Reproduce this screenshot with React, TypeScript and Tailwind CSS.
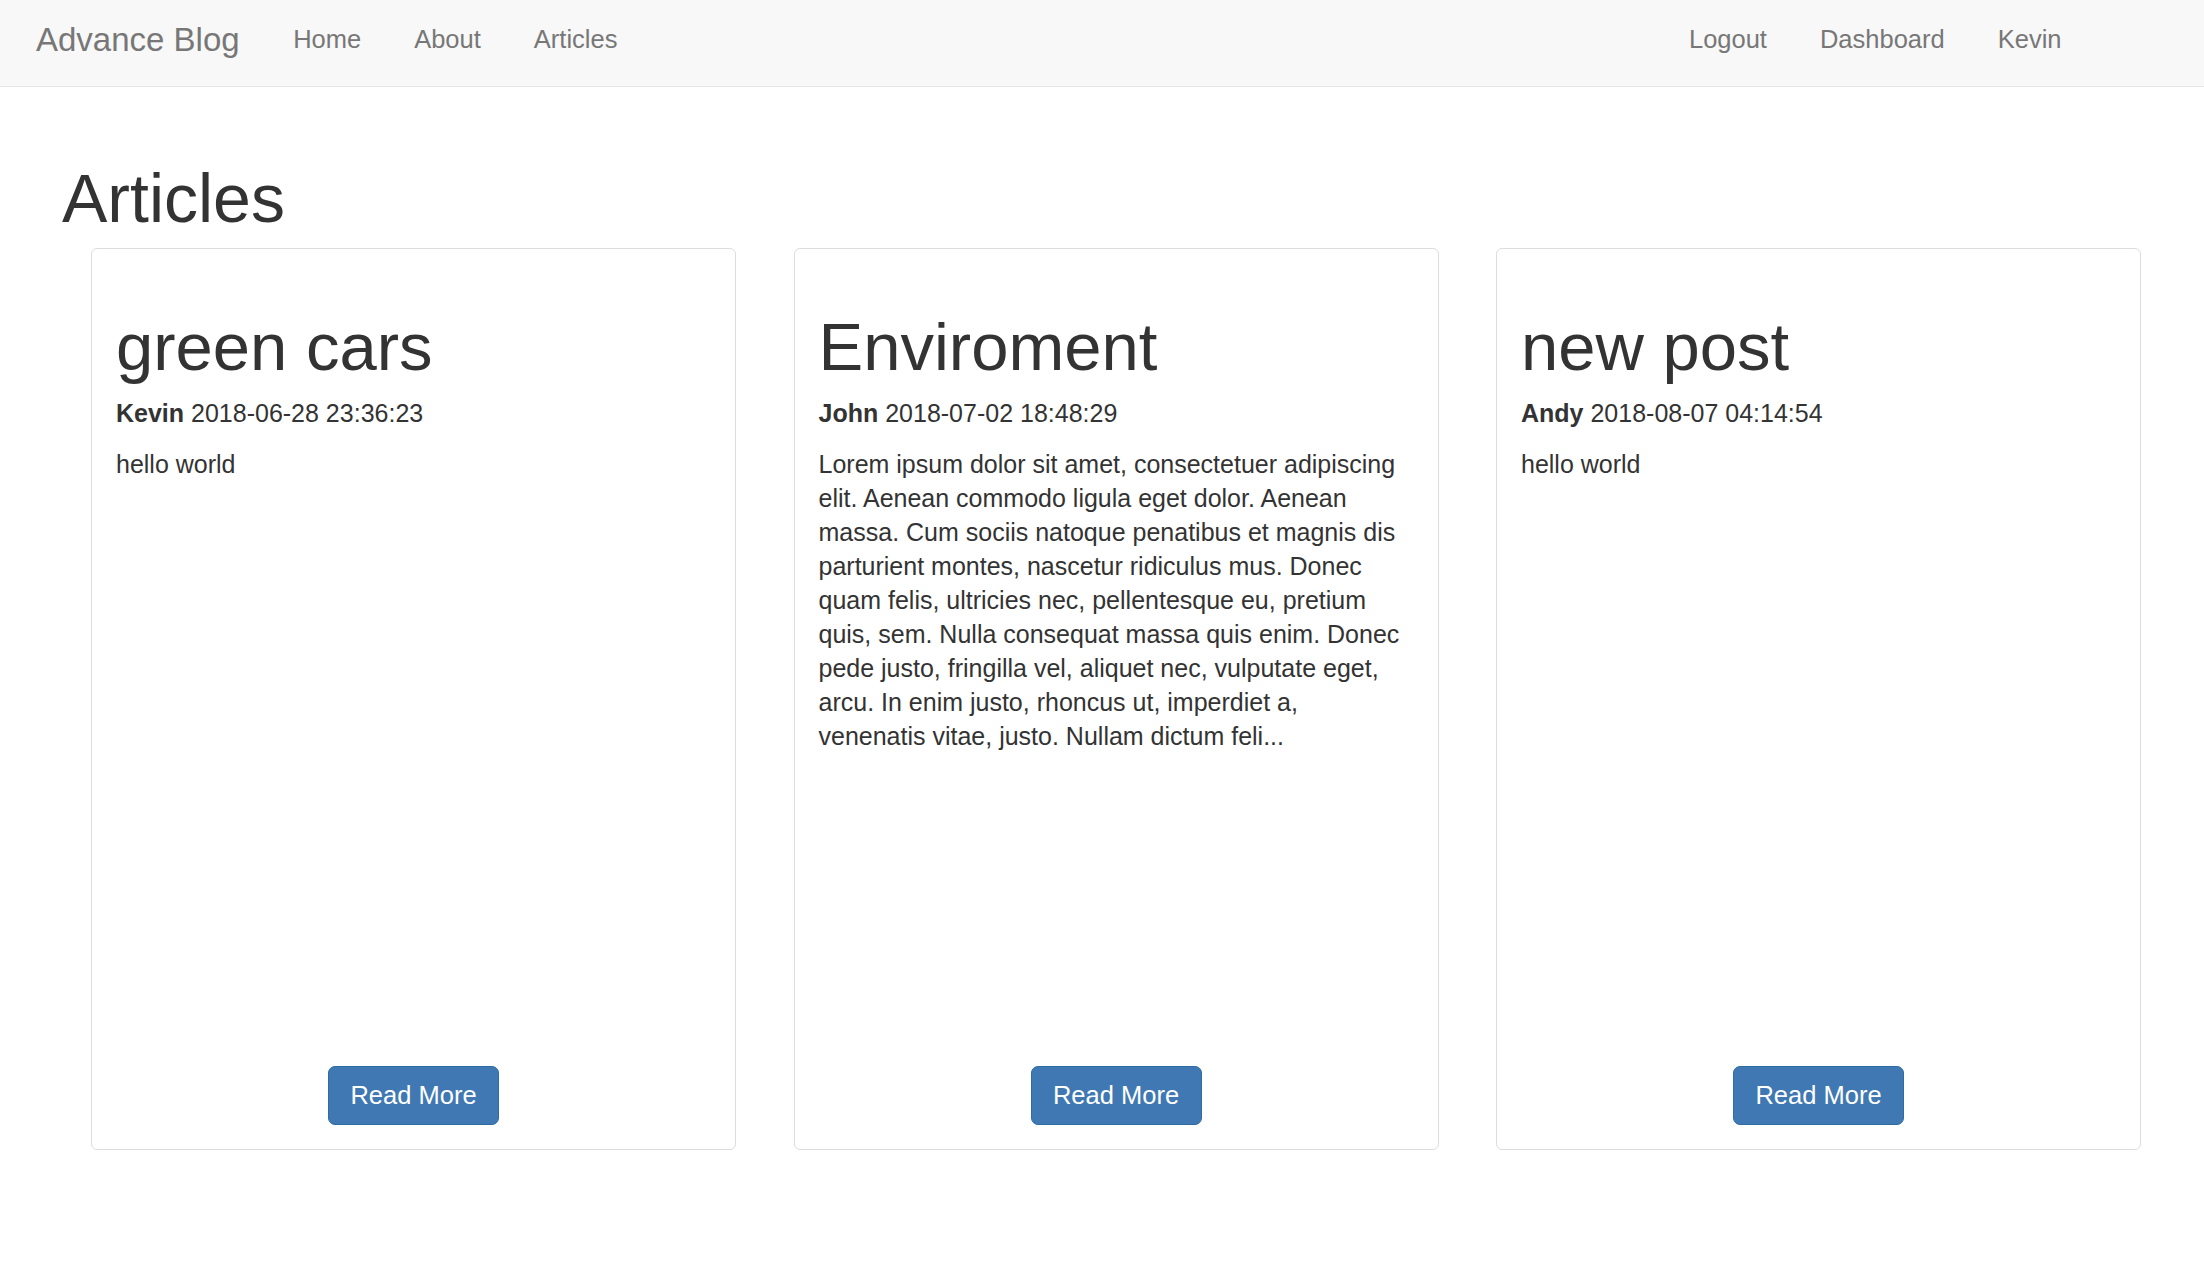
const articles = [
  {
    title: 'green cars',
    author: 'Kevin',
    date: '2018-06-28 23:36:23',
    body: 'hello world',
  },
  {
    title: 'Enviroment',
    author: 'John',
    date: '2018-07-02 18:48:29',
    body:
      'Lorem ipsum dolor sit amet, consectetuer adipiscing elit. Aenean commodo ligula eget dolor. Aenean massa. Cum sociis natoque penatibus et magnis dis parturient montes, nascetur ridiculus mus. Donec quam felis, ultricies nec, pellentesque eu, pretium quis, sem. Nulla consequat massa quis enim. Donec pede justo, fringilla vel, aliquet nec, vulputate eget, arcu. In enim justo, rhoncus ut, imperdiet a, venenatis vitae, justo. Nullam dictum feli...',
  },
  {
    title: 'new post',
    author: 'Andy',
    date: '2018-08-07 04:14:54',
    body: 'hello world',
  },
];

const leftLinks = ['Home', 'About', 'Articles'];
const rightLinks = ['Logout', 'Dashboard', 'Kevin'];

function NavLink({ label }: { label: string }) {
  return (
    <a href="#" className="block px-[26.5px] pt-[22px] text-[25.5px] leading-[34px] text-[#777] hover:text-[#333]">
      {label}
    </a>
  );
}

export default function App() {
  return (
    <div className="min-h-screen bg-white font-['Liberation_Sans',Arial,sans-serif] text-[#333]">
      <nav className="flex h-[87px] items-start border-b border-[#e7e7e7] bg-[#f8f8f8]">
        <a href="#" className="block pl-[36px] pr-[27px] pt-[20px] text-[33px] leading-[40px] text-[#777]">
          Advance Blog
        </a>
        {leftLinks.map((label) => (
          <NavLink key={label} label={label} />
        ))}
        <div className="ml-auto flex pr-[116px]">
          {rightLinks.map((label) => (
            <NavLink key={label} label={label} />
          ))}
        </div>
      </nav>

      <main>
        <h1 className="ml-[62px] mt-[75px] text-[68px] font-normal leading-[72px]">Articles</h1>

        <div className="mt-[14px] flex gap-[57.5px] pl-[91px]">
          {articles.map((article) => (
            <div
              key={article.title}
              className="flex h-[902px] w-[645px] flex-col rounded-[6px] border border-[#ddd] pb-[24px] pl-[24px] pr-[32px] pt-[62px]"
            >
              <h2 className="text-[67px] font-normal leading-[72px]">{article.title}</h2>
              <p className="mt-[13px] text-[25px] leading-[34px]">
                <strong className="font-bold">{article.author}</strong> {article.date}
              </p>
              <p className="mt-[17px] text-[25px] leading-[34px]">{article.body}</p>
              <div className="mt-auto flex justify-center pl-[8px]">
                <button
                  type="button"
                  className="flex h-[59px] w-[171px] items-center justify-center rounded-[7px] border border-[#2e6da4] bg-[#3f78b2] text-[25.5px] text-white hover:bg-[#286090]"
                >
                  Read More
                </button>
              </div>
            </div>
          ))}
        </div>
      </main>
    </div>
  );
}
